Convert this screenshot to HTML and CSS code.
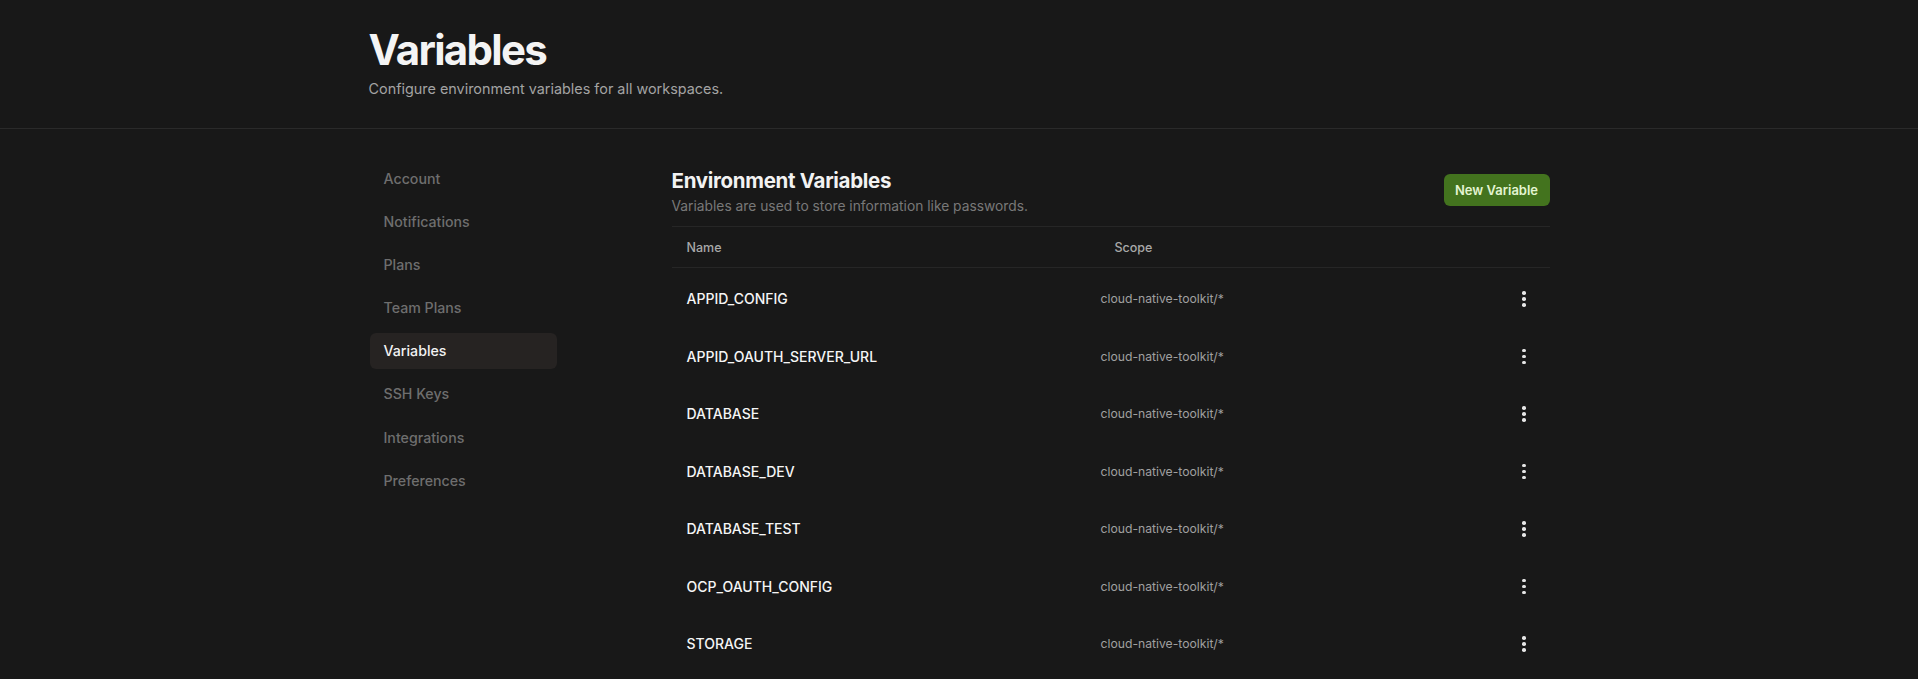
FILE: index.html
```html
<!DOCTYPE html>
<html lang="en">
<head>
<meta charset="utf-8">
<title>Variables</title>
<link rel="stylesheet" href="styles.css">
</head>
<body>
<header class="page-header">
  <div class="container">
    <h1 class="page-title">Variables</h1>
    <p class="page-subtitle">Configure environment variables for all workspaces.</p>
  </div>
</header>
<div class="container layout">
  <nav class="sidebar">
    <a class="nav-item">Account</a>
    <a class="nav-item">Notifications</a>
    <a class="nav-item">Plans</a>
    <a class="nav-item">Team Plans</a>
    <a class="nav-item active">Variables</a>
    <a class="nav-item">SSH Keys</a>
    <a class="nav-item">Integrations</a>
    <a class="nav-item">Preferences</a>
  </nav>
  <main class="content">
    <div class="section-head">
      <div>
        <h2 class="section-title">Environment Variables</h2>
        <p class="section-desc">Variables are used to store information like passwords.</p>
      </div>
      <button class="btn-primary">New Variable</button>
    </div>
    <div class="table">
      <div class="thead">
        <span class="th th-name">Name</span>
        <span class="th th-scope">Scope</span>
      </div>
      <div class="row"><span class="name">APPID_CONFIG</span><span class="scope">cloud-native-toolkit/*</span><span class="kebab"><i></i><i></i><i></i></span></div>
      <div class="row"><span class="name">APPID_OAUTH_SERVER_URL</span><span class="scope">cloud-native-toolkit/*</span><span class="kebab"><i></i><i></i><i></i></span></div>
      <div class="row"><span class="name">DATABASE</span><span class="scope">cloud-native-toolkit/*</span><span class="kebab"><i></i><i></i><i></i></span></div>
      <div class="row"><span class="name">DATABASE_DEV</span><span class="scope">cloud-native-toolkit/*</span><span class="kebab"><i></i><i></i><i></i></span></div>
      <div class="row"><span class="name">DATABASE_TEST</span><span class="scope">cloud-native-toolkit/*</span><span class="kebab"><i></i><i></i><i></i></span></div>
      <div class="row"><span class="name">OCP_OAUTH_CONFIG</span><span class="scope">cloud-native-toolkit/*</span><span class="kebab"><i></i><i></i><i></i></span></div>
      <div class="row"><span class="name">STORAGE</span><span class="scope">cloud-native-toolkit/*</span><span class="kebab"><i></i><i></i><i></i></span></div>
    </div>
  </main>
</div>
</body>
</html>
```

FILE: styles.css
```css
* { box-sizing: border-box; }
html, body {
  margin: 0;
  padding: 0;
  background: #181818;
  color: #f2f2f2;
  font-family: Inter, "Noto Sans", "Liberation Sans", sans-serif;
  -webkit-font-smoothing: antialiased;
}
.container {
  width: 1181px;
  margin: 0 auto;
}
.page-header {
  border-bottom: 1px solid #2a2a2a;
  padding-top: 27px;
  height: 129px;
}
.page-title {
  margin: 0;
  font-size: 42px;
  line-height: 46px;
  font-weight: 700;
  letter-spacing: -0.04em;
  color: #f4f4f4;
}
.page-subtitle {
  margin: 6px 0 0;
  font-size: 14.4px;
  line-height: 20px;
  color: #a3a3a3;
}
.layout {
  display: grid;
  grid-template-columns: 188px 1fr;
  column-gap: 115px;
  padding-top: 31px;
}
.sidebar {
  display: flex;
  flex-direction: column;
  gap: 7.2px;
  padding-left: 1px;
}
.nav-item {
  display: flex;
  align-items: center;
  height: 36px;
  padding-left: 14px;
  border-radius: 6px;
  font-size: 14.2px;
  font-weight: 500;
  color: #6e6e6e;
}
.nav-item.active {
  background: #262322;
  color: #f2f2f2;
}
.content {
  padding-top: 7px;
}
.section-head {
  display: flex;
  justify-content: space-between;
  align-items: flex-start;
  padding-bottom: 9px;
  border-bottom: 1px solid #262626;
}
.section-title {
  margin: 0;
  font-size: 20.5px;
  line-height: 28px;
  font-weight: 700;
  letter-spacing: -0.015em;
  color: #f2f2f2;
}
.section-desc {
  margin: 0;
  font-size: 13.8px;
  line-height: 22px;
  color: #787878;
}
.btn-primary {
  margin-top: 7px;
  width: 106px;
  height: 32px;
  border: none;
  border-radius: 6px;
  background: #43731e;
  color: #e3f5d2;
  font-family: inherit;
  font-size: 13px;
  font-weight: 600;
  padding: 0;
}
.thead {
  display: flex;
  align-items: center;
  height: 41px;
  border-bottom: 1px solid #262626;
  font-size: 12.5px;
  font-weight: 500;
  color: #a8a8a8;
}
.th-name { padding-left: 15px; width: 443px; }
.row {
  display: flex;
  align-items: center;
  height: 57.5px;
  padding-top: 4px;
}
.name {
  width: 429px;
  padding-left: 15px;
  font-size: 14px;
  font-weight: 500;
  color: #f5f5f5;
}
.scope {
  flex: 1;
  font-size: 12.2px;
  color: #a0a0a0;
}
.kebab {
  display: flex;
  flex-direction: column;
  align-items: center;
  gap: 2.5px;
  width: 3.5px;
  margin-right: 24px;
}
.kebab i {
  display: block;
  width: 3.5px;
  height: 3.5px;
  border-radius: 50%;
  background: #e6e6e6;
}
```
